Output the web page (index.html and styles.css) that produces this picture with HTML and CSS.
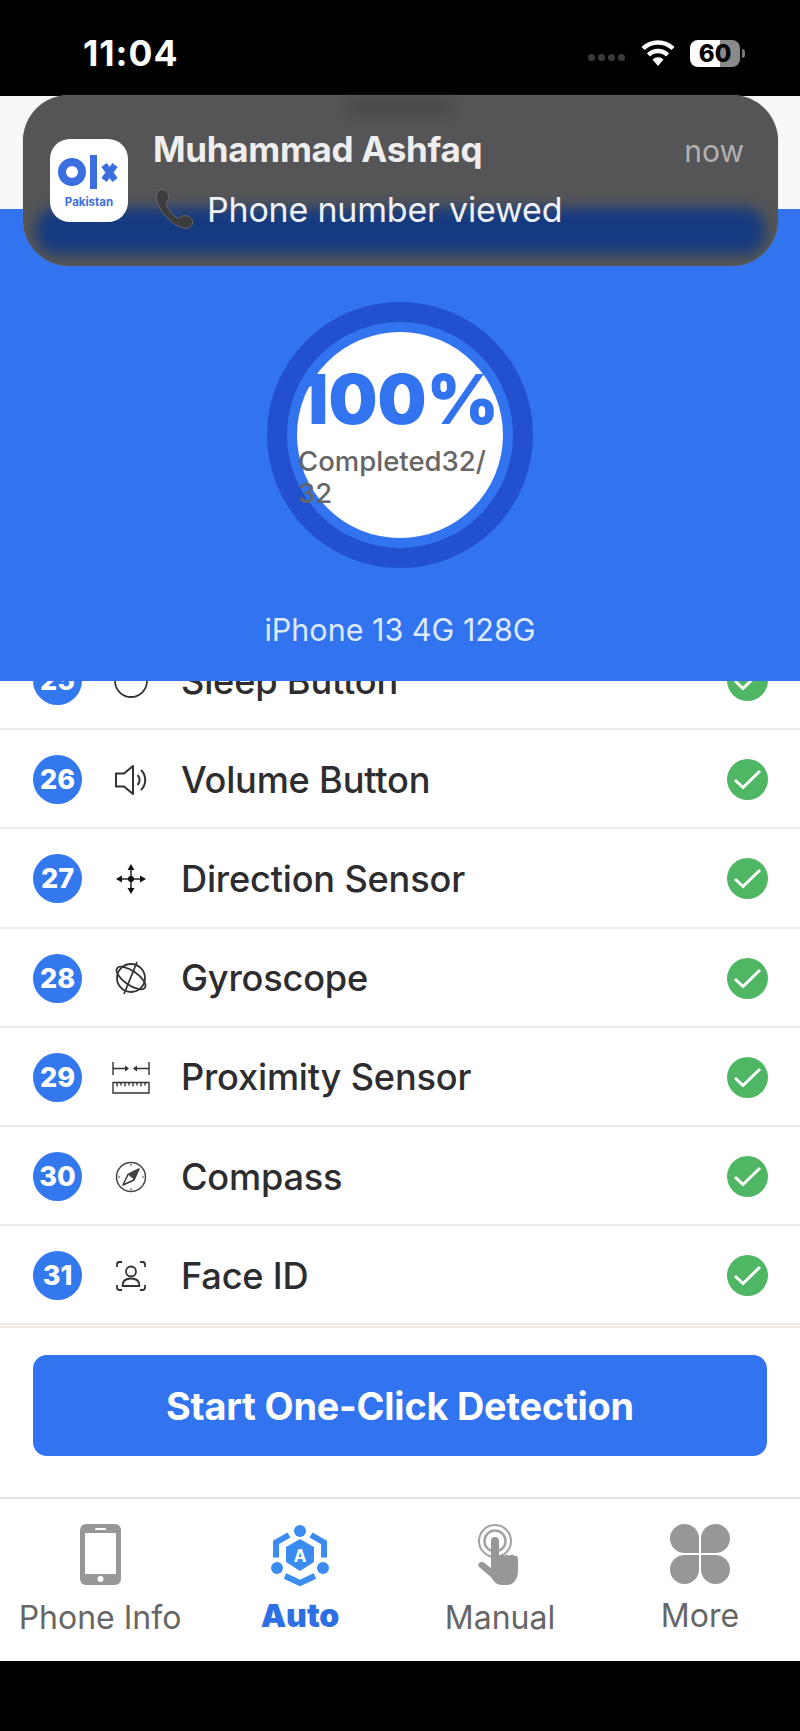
FILE: index.html
```html
<!DOCTYPE html>
<html lang="en">
<head>
  <meta charset="UTF-8">
  <title>One-Click Detection</title>
  <link rel="stylesheet" href="styles.css">
</head>
<body>
  <div class="status">
    <span class="time">11:04</span>
    <div class="status-right">
      <div class="dots"><i></i><i></i><i></i><i></i></div>
      <svg class="wifi" viewBox="0 0 36 26"><path d="M18 26l-5.500-6.500a8 8 0 0 1 11 0z" fill="#fff"/><path d="M8.500 15a13.500 13.500 0 0 1 19 0M3 8.500a21.500 21.500 0 0 1 30 0" fill="none" stroke="#fff" stroke-width="4.500" stroke-linecap="butt"/></svg>
      <div class="battery"><span>60</span></div>
      <div class="battery-tip"></div>
    </div>
  </div>

  <div class="notice">
    <div class="notice-navy"></div>
    <div class="notice-ghost"></div>
    <div class="notice-icon">
      <svg viewBox="0 0 78 83">
        <circle cx="22" cy="33" r="10" fill="none" stroke="#3b6fe0" stroke-width="8"/>
        <rect x="40" y="16" width="7" height="34" fill="#3b6fe0"/>
        <path d="M54 26l11 15M65 26L54 41" stroke="#3b6fe0" stroke-width="6.500"/>
      </svg>
      <span>Pakistan</span>
    </div>
    <div class="notice-body">
      <div class="notice-top">
        <span class="notice-title">Muhammad Ashfaq</span>
        <span class="notice-when">now</span>
      </div>
      <div class="notice-msg">
        <svg viewBox="0 0 44 44"><path d="M5 4c3-3 8-3 10 1 2 3 2 7 0 9-1 1-2 2-1 4 2 5 6 10 11 13 2 1 3 0 5-1 3-2 7-1 10 2 3 4 1 9-3 10-7 1-15-3-23-12C6 22 1 11 5 4z" fill="#3c3c3e" stroke="#6b6b6b" stroke-width="1"/></svg>
        <span>Phone number viewed</span>
      </div>
    </div>
  </div>

  <div class="hero">
    <div class="hero-top"></div>
    <div class="hero-main">
      <div class="ring">
        <div class="dial">
          <div class="percent">100%</div>
          <div class="done">Completed32/<br>32</div>
        </div>
      </div>
      <div class="model">iPhone 13 4G 128G</div>
    </div>
  </div>

  <div class="list">
    <div class="rows">
      <div class="row">
        <span class="num">25</span>
        <svg class="ico" viewBox="0 0 36 36"><circle cx="18" cy="18" r="16" fill="none" stroke="#333" stroke-width="1.800"/></svg>
        <span class="name">Sleep Button</span>
        <svg class="ok" viewBox="0 0 41 41"><circle cx="20.500" cy="20.500" r="20.500" fill="#4fb763"/><path d="M8 21l8 7.500L33 12" fill="none" stroke="#fff" stroke-width="3"/></svg>
      </div>
      <div class="row">
        <span class="num">26</span>
        <svg class="ico" viewBox="0 0 36 36"><path d="M3 11.500h8L20 4v28l-9-7.500H3z" fill="none" stroke="#333" stroke-width="2" stroke-linejoin="round"/><path d="M24.500 13a7 7 0 0 1 0 10M28 8a14 14 0 0 1 0 20" fill="none" stroke="#333" stroke-width="2"/></svg>
        <span class="name">Volume Button</span>
        <svg class="ok" viewBox="0 0 41 41"><circle cx="20.500" cy="20.500" r="20.500" fill="#4fb763"/><path d="M8 21l8 7.500L33 12" fill="none" stroke="#fff" stroke-width="3"/></svg>
      </div>
      <div class="row">
        <span class="num">27</span>
        <svg class="ico" viewBox="0 0 36 36"><path d="M18 6v24M6 18h24" stroke="#222" stroke-width="1.500"/><circle cx="18" cy="18" r="3" fill="#111"/><path d="M18 3l3.500 6h-7zM18 33l3.500-6h-7zM3 18l6-3.500v7zM33 18l-6-3.500v7z" fill="#111"/></svg>
        <span class="name">Direction Sensor</span>
        <svg class="ok" viewBox="0 0 41 41"><circle cx="20.500" cy="20.500" r="20.500" fill="#4fb763"/><path d="M8 21l8 7.500L33 12" fill="none" stroke="#fff" stroke-width="3"/></svg>
      </div>
      <div class="row">
        <span class="num">28</span>
        <svg class="ico" viewBox="0 0 36 36"><g fill="none" stroke="#333" stroke-width="1.800"><circle cx="18" cy="18" r="14"/><ellipse cx="18" cy="18" rx="17" ry="7" transform="rotate(35 18 18)"/><path d="M24 2L11 34"/></g></svg>
        <span class="name">Gyroscope</span>
        <svg class="ok" viewBox="0 0 41 41"><circle cx="20.500" cy="20.500" r="20.500" fill="#4fb763"/><path d="M8 21l8 7.500L33 12" fill="none" stroke="#fff" stroke-width="3"/></svg>
      </div>
      <div class="row">
        <span class="num">29</span>
        <svg class="ico ico-wide" viewBox="0 0 38 33"><g fill="none" stroke="#333" stroke-width="1.400"><path d="M1 1v13M37 1v13M1 7.500h15M37 7.500H22"/><path d="M1 21.500h36v10.500H1zM5 21.500v4M9 21.500v3M13 21.500v4M17 21.500v3M21 21.500v4M25 21.500v3M29 21.500v4M33 21.500v3"/></g><path d="M17 7.500l-4-3v6zM21 7.500l4-3v6z" fill="#333"/></svg>
        <span class="name">Proximity Sensor</span>
        <svg class="ok" viewBox="0 0 41 41"><circle cx="20.500" cy="20.500" r="20.500" fill="#4fb763"/><path d="M8 21l8 7.500L33 12" fill="none" stroke="#fff" stroke-width="3"/></svg>
      </div>
      <div class="row">
        <span class="num">30</span>
        <svg class="ico" viewBox="0 0 36 36"><circle cx="18" cy="18" r="14.500" fill="none" stroke="#444" stroke-width="1.500"/><path d="M26 10l-11 5.500-5 10.500 11-5z" fill="none" stroke="#333" stroke-width="1.500" stroke-linejoin="round"/><path d="M26 10l-11 5.500 6 5z" fill="#444"/><path d="M18 5v2M18 29v2M5 18h2M29 18h2" stroke="#888" stroke-width="1.500"/></svg>
        <span class="name">Compass</span>
        <svg class="ok" viewBox="0 0 41 41"><circle cx="20.500" cy="20.500" r="20.500" fill="#4fb763"/><path d="M8 21l8 7.500L33 12" fill="none" stroke="#fff" stroke-width="3"/></svg>
      </div>
      <div class="row">
        <span class="num">31</span>
        <svg class="ico" viewBox="0 0 36 36"><g fill="none" stroke="#333" stroke-width="1.800"><path d="M9 4H6.500A2.500 2.500 0 0 0 4 6.500V9M27 4h2.500A2.500 2.500 0 0 1 32 6.500V9M9 32H6.500A2.500 2.500 0 0 1 4 29.500V27M27 32h2.500a2.500 2.500 0 0 0 2.500-2.500V27"/><circle cx="18" cy="13.500" r="5"/><path d="M9.500 28c0-5 3.500-7.500 8.500-7.500s8.500 2.500 8.500 7.500z" stroke-linejoin="round"/></g></svg>
        <span class="name">Face ID</span>
        <svg class="ok" viewBox="0 0 41 41"><circle cx="20.500" cy="20.500" r="20.500" fill="#4fb763"/><path d="M8 21l8 7.500L33 12" fill="none" stroke="#fff" stroke-width="3"/></svg>
      </div>
    </div>
  </div>

  <div class="action">
    <div class="start">Start One-Click Detection</div>
  </div>

  <div class="tabs">
    <div class="tab tab-low">
      <svg class="tab-ico" viewBox="0 0 60 62"><rect x="10" y="0" width="41" height="61" rx="6" fill="#979797"/><rect x="15" y="9" width="31" height="41" fill="#fff"/><rect x="25" y="4" width="11" height="2" rx="1" fill="#fff"/><circle cx="30.500" cy="55" r="3" fill="#fff"/></svg>
      <span class="tab-label">Phone Info</span>
    </div>
    <div class="tab tab-on">
      <svg class="tab-ico" viewBox="0 0 60 62">
        <circle cx="30" cy="7" r="6" fill="#3a8cf0"/><circle cx="7" cy="44" r="6" fill="#3a8cf0"/><circle cx="53" cy="44" r="6" fill="#3a8cf0"/>
        <path d="M19 11L6 18.500v15M41 11l13 7.500v15M15 52l15 7 15-7" fill="none" stroke="#3a8cf0" stroke-width="6"/>
        <path d="M30 15l14 8v15l-14 9-14-9V23z" fill="#3a8cf0"/>
        <text x="30" y="38" class="auto-a">A</text>
      </svg>
      <span class="tab-label">Auto</span>
    </div>
    <div class="tab tab-low">
      <svg class="tab-ico" viewBox="0 0 60 62">
        <circle cx="25" cy="17" r="16" fill="none" stroke="#a3a3a3" stroke-width="2"/>
        <circle cx="25" cy="17" r="10.500" fill="none" stroke="#a3a3a3" stroke-width="2.500"/>
        <path d="M21 17a4 4 0 0 1 8 0v15c2-2 4-2 5 0 2-2 4-2 5 0 2-2 4-2 5 0 2-1 4 0 4 3v12c0 7-4 14-11 14H32c-5 0-8-3-11-8L9 43c-2-3 1-6 4-5l8 6z" fill="#979797"/>
      </svg>
      <span class="tab-label">Manual</span>
    </div>
    <div class="tab">
      <div class="petals"><i></i><i></i><i></i><i></i></div>
      <span class="tab-label">More</span>
    </div>
  </div>

  <div class="home-bar"></div>
</body>
</html>
```

FILE: styles.css
```css
body {
  margin: 0;
  width: 800px;
  height: 1731px;
  position: relative;
  overflow: hidden;
  background: #000;
  font-family: Inter, 'Noto Sans', sans-serif;
}

.status {
  height: 96px;
  background: #000;
  color: #fff;
  display: flex;
  justify-content: space-between;
  align-items: center;
  padding: 10px 55px 0 83px;
  box-sizing: border-box;
}

.time {
  font-size: 35.500px;
  font-weight: 700;
  letter-spacing: 1px;
}

.status-right {
  display: flex;
  align-items: center;
}

.dots {
  display: flex;
  gap: 3px;
  margin: 8px 15px 0 0;
}

.dots i {
  width: 7px;
  height: 7px;
  border-radius: 50%;
  background: #3a3a3a;
}

.wifi {
  width: 36px;
  height: 26px;
  margin-right: 14px;
}

.battery {
  width: 50px;
  height: 27px;
  border-radius: 8px;
  background: linear-gradient(90deg, #fff 60%, #8a8a8a 60%);
  color: #000;
  font-size: 24px;
  font-weight: 800;
  display: flex;
  align-items: center;
  justify-content: center;
}

.battery-tip {
  width: 3px;
  height: 9px;
  margin-left: 2px;
  border-radius: 0 3px 3px 0;
  background: #777;
}

.notice {
  position: absolute;
  left: 23px;
  top: 95px;
  width: 755px;
  height: 171px;
  box-sizing: border-box;
  padding: 44px 34px 0 27px;
  display: flex;
  gap: 25px;
  border-radius: 46px;
  background: #555557;
  overflow: hidden;
  z-index: 2;
  box-shadow: 0 0 1px #888;
}

.notice-navy {
  position: absolute;
  left: 13px;
  right: 13px;
  top: 113px;
  height: 46px;
  border-radius: 20px;
  background: #153a80;
  filter: blur(7px);
}

.notice-ghost {
  position: absolute;
  left: 325px;
  top: 8px;
  width: 105px;
  height: 8px;
  background: #3f3f40;
  filter: blur(7px);
}

.notice-icon {
  position: relative;
  flex: none;
  width: 78px;
  height: 83px;
  border-radius: 20px;
  background: #fff;
  text-align: center;
}

.notice-icon svg {
  position: absolute;
  left: 0;
  top: 0;
  width: 78px;
  height: 83px;
}

.notice-icon span {
  position: absolute;
  left: 0;
  right: 0;
  top: 56px;
  font-size: 11.500px;
  font-weight: 700;
  color: #3b6fe0;
}

.notice-body {
  position: relative;
  flex: 1;
}

.notice-top {
  display: flex;
  justify-content: space-between;
  align-items: center;
  height: 24px;
  margin-top: -2px;
}

.notice-title {
  font-size: 35px;
  font-weight: 700;
  color: #eee;
  letter-spacing: -0.3px;
}

.notice-when {
  font-size: 30px;
  color: #b0b0b0;
  margin-top: 4px;
}

.notice-msg {
  display: flex;
  align-items: center;
  gap: 12px;
  margin-top: 27px;
  font-size: 34px;
  color: #eef1f6;
  letter-spacing: -0.2px;
}

.notice-msg svg {
  width: 42px;
  height: 42px;
  flex: none;
}

.hero {
  height: 585px;
  display: flex;
  flex-direction: column;
}

.hero-top {
  height: 113px;
  background: #f8f8f8;
}

.hero-main {
  flex: 1;
  background: #3273ef;
  padding-top: 93px;
  display: flex;
  flex-direction: column;
  align-items: center;
}

.ring {
  width: 226px;
  height: 226px;
  border: 20px solid #2350cf;
  border-radius: 50%;
  background: #3273ef;
  display: flex;
  align-items: center;
  justify-content: center;
}

.dial {
  width: 206px;
  height: 206px;
  border-radius: 50%;
  background: #fff;
  display: flex;
  flex-direction: column;
  align-items: center;
}

.percent {
  margin-top: 32px;
  margin-left: -4px;
  font-size: 69px;
  line-height: 70px;
  font-weight: 900;
  color: #3273ef;
  white-space: nowrap;
}

.done {
  align-self: flex-start;
  margin-top: 11px;
  padding-left: 1px;
  font-size: 27.500px;
  font-weight: 500;
  line-height: 32px;
  color: #666;
  white-space: nowrap;
}

.model {
  margin-top: 43px;
  font-size: 30.500px;
  color: #dde9ff;
}

.list {
  height: 645px;
  background: #fff;
  overflow: hidden;
  border-bottom: 2px solid #f6ebe0;
}

.rows {
  margin-top: -50px;
}

.row {
  height: 99.200px;
  box-sizing: border-box;
  padding: 2px 30px 0 33px;
  display: flex;
  align-items: center;
  border-bottom: 2px solid #ebebeb;
}

.num {
  width: 49px;
  height: 49px;
  flex: none;
  border-radius: 50%;
  background: #3478ee;
  color: #fff;
  font-size: 27px;
  font-weight: 800;
  display: flex;
  align-items: center;
  justify-content: center;
}

.ico {
  width: 36px;
  height: 36px;
  flex: none;
  margin: 0 32px 0 31px;
}

.ico-wide {
  width: 38px;
  height: 33px;
  margin: 0 31px 0 30px;
}

.name {
  flex: 1;
  font-size: 36.200px;
  font-weight: 500;
  color: #2d2d2f;
  letter-spacing: -0.2px;
}

.ok {
  width: 41px;
  height: 41px;
  flex: none;
  margin-right: 2px;
}

.action {
  padding: 27px 33px 0;
  height: 171px;
  box-sizing: border-box;
  background: #fff;
  border-bottom: 2px solid #e2e2e2;
}

.start {
  height: 101px;
  border-radius: 14px;
  background: #3273ef;
  color: #fff;
  font-size: 37.800px;
  font-weight: 700;
  letter-spacing: -0.2px;
  display: flex;
  align-items: center;
  justify-content: center;
}

.tabs {
  height: 162px;
  background: #fff;
  display: grid;
  grid-template-columns: repeat(4, 1fr);
}

.tab {
  display: flex;
  flex-direction: column;
  align-items: center;
  padding-top: 25px;
  color: #666;
}

.tab-ico {
  width: 60px;
  height: 62px;
  flex: none;
}

.tab-label {
  margin-top: 10px;
  font-size: 32px;
  line-height: 40px;
  white-space: nowrap;
}

.tab-low .tab-label {
  margin-top: 12px;
}

.tab-on {
  color: #2f6fe6;
}

.tab-on .tab-label {
  font-weight: 900;
}

.auto-a {
  font-size: 17px;
  font-weight: 700;
  fill: #fff;
  text-anchor: middle;
}

.petals {
  width: 60px;
  height: 60px;
  display: grid;
  grid-template-columns: 1fr 1fr;
  gap: 2px;
  margin-bottom: 2px;
}

.petals i {
  background: #979797;
  border-radius: 50%;
}

.petals i:nth-child(1) { border-bottom-right-radius: 0; }
.petals i:nth-child(2) { border-bottom-left-radius: 0; }
.petals i:nth-child(3) { border-top-right-radius: 0; }
.petals i:nth-child(4) { border-top-left-radius: 0; }

.home-bar {
  height: 70px;
  background: #000;
}
```
